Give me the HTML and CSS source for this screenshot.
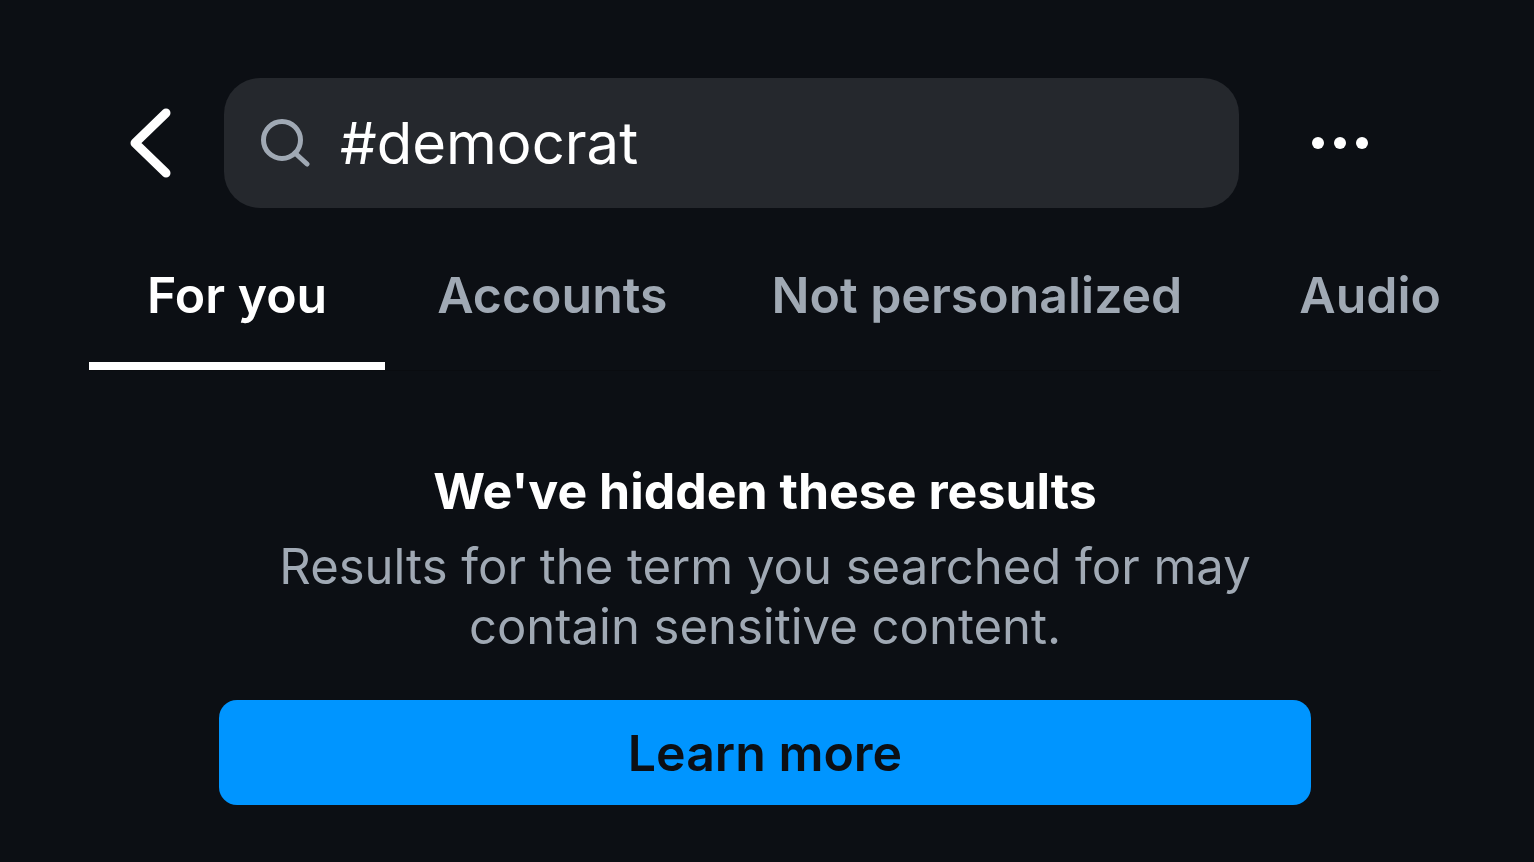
FILE: index.html
```html
<!DOCTYPE html>
<html lang="en">
<head>
    <meta charset="UTF-8">
    <meta name="viewport" content="width=device-width, initial-scale=1.0">
    <title>Search</title>
    <link rel="stylesheet" href="styles.css">
</head>
<body>
    <header class="top-bar">
        <button class="icon-button back-button" aria-label="Back">
            <svg width="44" height="72" viewBox="0 0 44 72" fill="none" stroke="#fff" stroke-width="9" stroke-linecap="round" stroke-linejoin="round">
                <path d="M37 6 6 36l31 30"/>
            </svg>
        </button>
        <label class="search-box">
            <svg width="50" height="50" viewBox="0 0 50 50" fill="none" stroke="#a0a9b4" stroke-width="5" stroke-linecap="round">
                <circle cx="22" cy="22" r="18.5"/>
                <path d="M35 35l12 11"/>
            </svg>
            <input class="search-input" type="text" value="#democrat" aria-label="Search">
        </label>
        <button class="icon-button more-button" aria-label="More options">
            <svg width="56" height="12" viewBox="0 0 56 12" fill="#fff">
                <circle cx="6" cy="6" r="6"/>
                <circle cx="28" cy="6" r="6"/>
                <circle cx="50" cy="6" r="6"/>
            </svg>
        </button>
    </header>

    <nav class="tabs">
        <a class="tab active" href="#">For you</a>
        <a class="tab" href="#">Accounts</a>
        <a class="tab" href="#">Not personalized</a>
        <a class="tab" href="#">Audio</a>
    </nav>

    <main class="notice">
        <h1>We've hidden these results</h1>
        <p>Results for the term you searched for may contain sensitive content.</p>
        <button class="learn-button">Learn more</button>
    </main>
</body>
</html>
```

FILE: styles.css
```css
* {
    box-sizing: border-box;
}
body {
    font-family: Inter, sans-serif;
    margin: 0;
    padding: 78px 93px 0 89px;
    background-color: #0c0f14;
    color: #fff;
}
.top-bar {
    display: flex;
    align-items: center;
    padding: 0 73px 0 40px;
}
.icon-button {
    display: flex;
    padding: 0;
    border: none;
    background: none;
    cursor: pointer;
}
.search-box {
    flex: 1;
    display: flex;
    align-items: center;
    gap: 30px;
    min-width: 0;
    height: 130px;
    margin: 0 73px 0 51px;
    padding: 0 36px;
    border-radius: 36px;
    background-color: #25282d;
}
.search-input {
    flex: 1;
    min-width: 0;
    padding: 0;
    border: none;
    outline: none;
    background: none;
    color: #fff;
    font: 400 58px Inter, sans-serif;
}
/* Tabs */
.tabs {
    display: flex;
    margin-top: 37px;
    border-bottom: 1px solid #0a0c10;
}
.tab {
    padding: 20px 52px 37px;
    color: #a0a9b4;
    font-size: 50px;
    font-weight: 600;
    line-height: 60px;
    text-decoration: none;
    white-space: nowrap;
}
.tab.active {
    padding: 20px 58px 37px;
    border-bottom: 8px solid #fff;
    color: #fff;
}
.tab:last-child {
    margin-left: auto;
    padding-right: 0;
}
/* Hidden results message */
.notice {
    margin-top: 90px;
    padding: 0 130px;
    text-align: center;
}
.notice h1 {
    margin: 0 0 16px;
    font-size: 50px;
    font-weight: 700;
    line-height: 60px;
}
.notice p {
    margin: 0;
    color: #a0a9b4;
    font-size: 49px;
    line-height: 60px;
}
.learn-button {
    width: 100%;
    height: 105px;
    margin-top: 43px;
    border: none;
    border-radius: 18px;
    background-color: #0095ff;
    color: #0c0f14;
    font: 600 50px Inter, sans-serif;
    cursor: pointer;
}
```
